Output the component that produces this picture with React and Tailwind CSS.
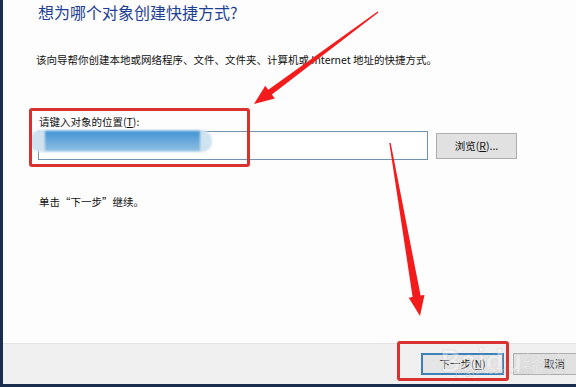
import React from "react";

const font = { fontFamily: '"Noto Sans CJK SC", "Noto Sans", sans-serif' };

export default function App() {
  return (
    <div
      className="relative w-[576px] h-[387px] overflow-hidden flex bg-[#fcfcfc]"
      style={font}
    >
      <div className="w-[3px] bg-[#1b2d4d] shrink-0" />
      <div className="flex-1 flex flex-col min-w-0">
        <div className="flex-1 pl-[35px] flex flex-col bg-[#fdfdfd]">
          <div className="mt-[2px] text-[16px] leading-[20px] text-[#1f3f94]">
            想为哪个对象创建快捷方式?
          </div>
          <div className="mt-[30px] text-[10.5px] leading-[16px] text-[#111] -ml-[2px]">
            该向导帮你创建本地或网络程序、文件、文件夹、计算机或 Internet 地址的快捷方式。
          </div>
          <div className="mt-[46px] text-[10.5px] leading-[16px] text-[#111] ml-[1px]">
            请键入对象的位置(<span className="underline">T</span>):
          </div>
          <div className="mt-[1px] flex items-center gap-[8px]">
            <div className="w-[390px] h-[29px] border border-[#6f93b0] bg-white" />
            <div className="w-[81px] h-[26px] border border-[#adadad] bg-[#e1e1e1] flex items-center justify-center text-[10.5px] text-[#111]">
              浏览(<span className="underline">R</span>)...
            </div>
          </div>
          <div className="mt-[34px] text-[10.5px] leading-[16px] text-[#111] ml-[1px]">
            单击“下一步”继续。
          </div>
        </div>
        <div className="h-[41px] border-t border-[#e2e2e2] bg-[#f0f0f0] flex items-start pt-[9px] pl-[418px] gap-[9px] relative">
          <div className="w-[83px] h-[22px] shrink-0 border-2 border-[#3c80b8] bg-[#e5e5e5] flex items-center justify-center text-[10.5px] text-[#111]">
            下一步(<span className="underline">N</span>)
          </div>
          <div className="w-[83px] h-[22px] shrink-0 border border-[#adadad] bg-[#e1e1e1] flex items-center justify-center text-[10.5px] text-[#111]">
            取消
          </div>
          <div
            className="absolute left-[437px] top-[-2px] text-[30px] leading-[34px] font-bold text-white/40 tracking-tight select-none pointer-events-none"
            style={{ WebkitTextStroke: "1px rgba(200,200,200,0.35)" }}
          >
            Baidu<span className="text-[22px] font-normal">经验</span>
          </div>
          <div className="absolute left-[452px] top-[22px] text-[9px] leading-[10px] text-[#cfcfcf]/60 select-none pointer-events-none">
            jingyan.baidu.com
          </div>
        </div>
        <div className="h-[3px] bg-[#1b2d4d]" />
      </div>

      {/* blurred redaction */}
      <div className="absolute left-[30px] top-[130px] w-[182px] h-[22px] rounded-[10px] bg-[#cfe2f0] blur-[1px]" />
      <div className="absolute left-[45px] top-[131px] w-[155px] h-[20px] bg-gradient-to-b from-[#3f93d4] to-[#8fbfe2] blur-[1px]" />

      {/* red annotation boxes */}
      <div className="absolute left-[29px] top-[108px] w-[221px] h-[59px] border-[3px] border-[#d9312f] rounded-[3px]" />
      <div className="absolute left-[397px] top-[341px] w-[112px] h-[40px] border-[3px] border-[#d9312f] rounded-[3px]" />

      {/* arrows */}
      <svg className="absolute inset-0 pointer-events-none" width="576" height="387" viewBox="0 0 576 387">
        <polygon
          fill="#f21c1c"
          points="378.4,12.6 271.9,94.5 274.9,98.5 254,104 265.3,85.7 268.3,89.7 377.6,11.4"
        />
        <polygon
          fill="#f21c1c"
          points="389.3,143.1 412.6,297.0 408.7,297.7 420,316 424.5,294.9 420.6,295.6 390.7,142.9"
        />
      </svg>
    </div>
  );
}
